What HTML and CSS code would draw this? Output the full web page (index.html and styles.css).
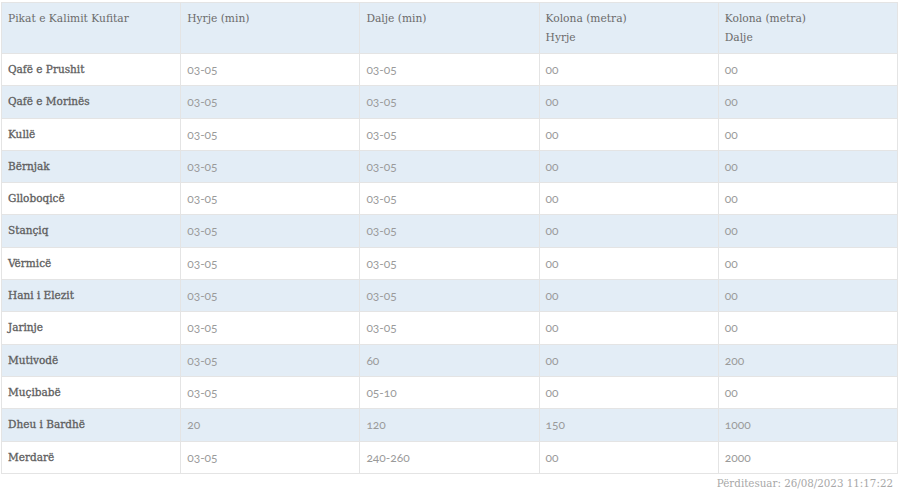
FILE: index.html
```html
<!DOCTYPE html>
<html lang="sq">
<head>
<meta charset="utf-8">
<link rel="stylesheet" href="styles.css">
</head>
<body>
<div class="wrap">
<table class="border-table">
<thead>
<tr>
<th>Pikat e Kalimit Kufitar</th>
<th>Hyrje (min)</th>
<th>Dalje (min)</th>
<th>Kolona (metra)<br>Hyrje</th>
<th>Kolona (metra)<br>Dalje</th>
</tr>
</thead>
<tbody>
<tr><td class="name">Qafë e Prushit</td><td>03-05</td><td>03-05</td><td>00</td><td>00</td></tr>
<tr><td class="name">Qafë e Morinës</td><td>03-05</td><td>03-05</td><td>00</td><td>00</td></tr>
<tr><td class="name">Kullë</td><td>03-05</td><td>03-05</td><td>00</td><td>00</td></tr>
<tr><td class="name">Bërnjak</td><td>03-05</td><td>03-05</td><td>00</td><td>00</td></tr>
<tr><td class="name">Glloboqicë</td><td>03-05</td><td>03-05</td><td>00</td><td>00</td></tr>
<tr><td class="name">Stanҫiq</td><td>03-05</td><td>03-05</td><td>00</td><td>00</td></tr>
<tr><td class="name">Vërmicë</td><td>03-05</td><td>03-05</td><td>00</td><td>00</td></tr>
<tr><td class="name">Hani i Elezit</td><td>03-05</td><td>03-05</td><td>00</td><td>00</td></tr>
<tr><td class="name">Jarinje</td><td>03-05</td><td>03-05</td><td>00</td><td>00</td></tr>
<tr><td class="name">Mutivodë</td><td>03-05</td><td>60</td><td>00</td><td>200</td></tr>
<tr><td class="name">Muçibabë</td><td>03-05</td><td>05-10</td><td>00</td><td>00</td></tr>
<tr><td class="name">Dheu i Bardhë</td><td>20</td><td>120</td><td>150</td><td>1000</td></tr>
<tr><td class="name">Merdarë</td><td>03-05</td><td>240-260</td><td>00</td><td>2000</td></tr>
</tbody>
</table>
<p class="updated">Përditesuar: 26/08/2023 11:17:22</p>
</div>
</body>
</html>
```
FILE: styles.css
```css
html, body {
  margin: 0;
  padding: 0;
  background: #ffffff;
}
.wrap {
  padding: 2px 2px 0 1px;
}
.border-table {
  width: 100%;
  border-collapse: collapse;
  table-layout: fixed;
  border: 1px solid #e4e4e4;
}
.border-table th,
.border-table td {
  border: 1px solid #e4e4e4;
  text-align: left;
  vertical-align: top;
}
.border-table th {
  background: #e3edf6;
  font-family: "DejaVu Serif", serif;
  font-weight: normal;
  font-size: 10.7px;
  color: #6b6b6b;
  line-height: 19px;
  padding: 6px 6px 6px;
  height: 38px;
}
.border-table td {
  font-family: Lato, "Open Sans", sans-serif;
  font-variant-numeric: oldstyle-nums;
  font-size: 12px;
  color: #9a9a9a;
  line-height: 19.3px;
  padding: 6px 6px;
  vertical-align: middle;
}
.border-table td.name {
  font-family: "DejaVu Serif", serif;
  font-weight: normal;
  font-size: 10.5px;
  color: #5e5e5e;
  -webkit-text-stroke: 0.3px #5e5e5e;
}
.border-table tbody tr:nth-child(even) td {
  background: #e3edf6;
}
.updated {
  margin: 2px 5px 0 0;
  text-align: right;
  font-family: "DejaVu Serif", serif;
  font-size: 10.3px;
  color: #a8a8a8;
  line-height: 15px;
}
```
